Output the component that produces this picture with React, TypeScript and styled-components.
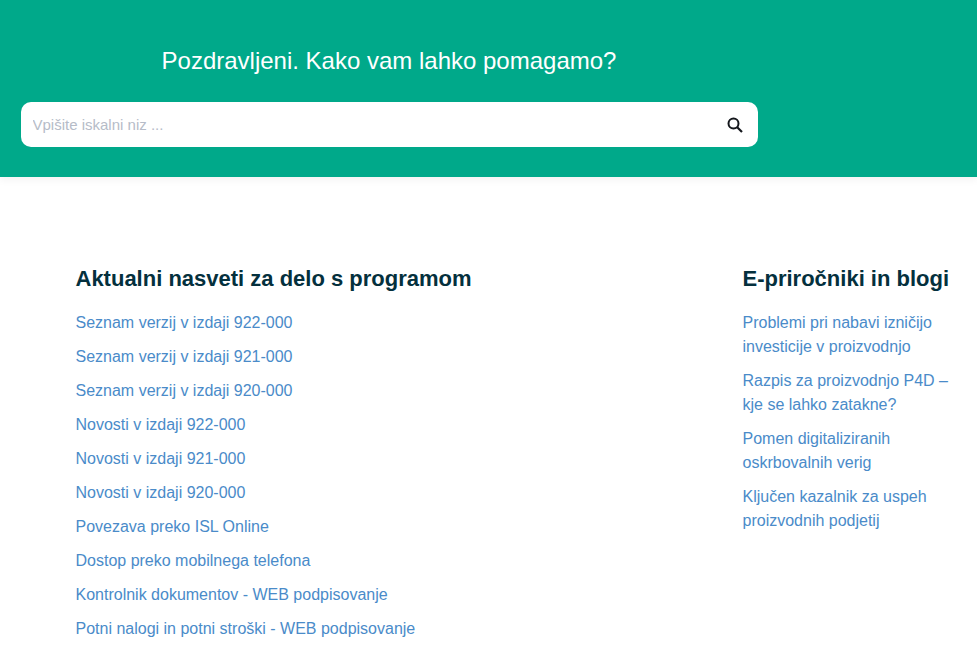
import styled, { createGlobalStyle } from 'styled-components'

const GlobalStyle = createGlobalStyle`
  html, body {
    margin: 0;
    padding: 0;
    background: #fff;
    overflow: hidden;
    font-family: "Liberation Sans", Arial, sans-serif;
  }
`

const Hero = styled.header`
  height: 177px;
  box-sizing: border-box;
  background: #00a98a;
  padding: 45px 0 0 21px;
  box-shadow: 0 3px 8px rgba(0, 0, 0, 0.05);
`

const HeroInner = styled.div`
  width: 737px;
`

const HeroTitle = styled.h1`
  margin: 0 0 25px;
  font-size: 24px;
  line-height: 32px;
  font-weight: 400;
  color: #fff;
  text-align: center;
  padding-right: 1px;
`

const SearchBox = styled.div`
  height: 45px;
  background: #fff;
  border-radius: 10px;
  display: flex;
  align-items: center;
  justify-content: space-between;
  padding: 0 15px 0 11.5px;
`

const SearchInput = styled.input`
  flex: 1;
  border: 0;
  outline: 0;
  background: transparent;
  padding: 0;
  font-family: inherit;
  font-size: 15px;
  color: #333;

  &::placeholder {
    color: #b6bcc8;
    opacity: 1;
  }
`

const Content = styled.main`
  display: grid;
  grid-template-columns: 667px 1fr;
  padding: 88px 0 0 75.5px;
`

const SectionTitle = styled.h2`
  margin: 0 0 18px;
  font-size: 22px;
  line-height: 28px;
  font-weight: 700;
  color: #04303d;
  white-space: nowrap;
`

const LinkList = styled.ul`
  list-style: none;
  margin: 0;
  padding: 0;
  display: flex;
  flex-direction: column;
  gap: 10px;
  max-width: ${(p: { $narrow?: boolean }) => (p.$narrow ? '215px' : 'none')};
`

const LinkItem = styled.li`
  font-size: 16px;
  line-height: 24px;
`

const ListLink = styled.a`
  color: #4a8bc9;
  text-decoration: none;
`

const latest = [
  'Seznam verzij v izdaji 922-000',
  'Seznam verzij v izdaji 921-000',
  'Seznam verzij v izdaji 920-000',
  'Novosti v izdaji 922-000',
  'Novosti v izdaji 921-000',
  'Novosti v izdaji 920-000',
  'Povezava preko ISL Online',
  'Dostop preko mobilnega telefona',
  'Kontrolnik dokumentov - WEB podpisovanje',
  'Potni nalogi in potni stroški - WEB podpisovanje',
]

const blogs = [
  'Problemi pri nabavi izničijo investicije v proizvodnjo',
  'Razpis za proizvodnjo P4D – kje se lahko zatakne?',
  'Pomen digitaliziranih oskrbovalnih verig',
  'Ključen kazalnik za uspeh proizvodnih podjetij',
]

function SearchIcon() {
  return (
    <svg width="16" height="16" viewBox="0 0 16 16" fill="none" stroke="#14171c">
      <circle cx="6.5" cy="6.5" r="5" strokeWidth="2" />
      <path d="M10.2 10.2 15 15" strokeWidth="2.2" />
    </svg>
  )
}

export default function App() {
  return (
    <>
      <GlobalStyle />
      <Hero>
        <HeroInner>
          <HeroTitle>Pozdravljeni. Kako vam lahko pomagamo?</HeroTitle>
          <SearchBox>
            <SearchInput placeholder="Vpišite iskalni niz ..." />
            <SearchIcon />
          </SearchBox>
        </HeroInner>
      </Hero>
      <Content>
        <section>
          <SectionTitle>Aktualni nasveti za delo s programom</SectionTitle>
          <LinkList>
            {latest.map((item) => (
              <LinkItem key={item}>
                <ListLink href="#">{item}</ListLink>
              </LinkItem>
            ))}
          </LinkList>
        </section>
        <section>
          <SectionTitle>E-priročniki in blogi</SectionTitle>
          <LinkList $narrow>
            {blogs.map((item) => (
              <LinkItem key={item}>
                <ListLink href="#">{item}</ListLink>
              </LinkItem>
            ))}
          </LinkList>
        </section>
      </Content>
    </>
  )
}
